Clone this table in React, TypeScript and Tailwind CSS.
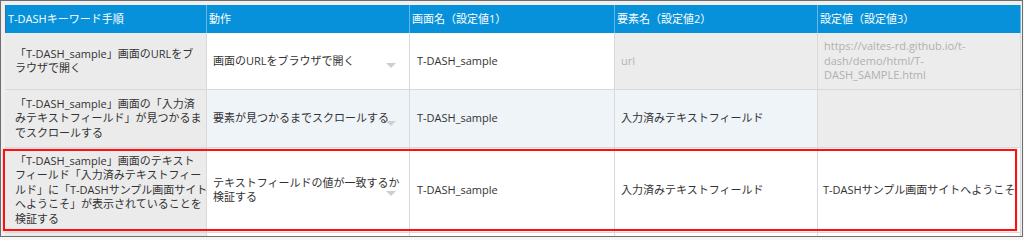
import React from "react";

const F = "font-['Open_Sans','Noto_Sans_CJK_JP',sans-serif]";

function Caret() {
  return (
    <span className="absolute right-[13px] top-1/2 mt-[2px] w-0 h-0 border-l-[5px] border-r-[5px] border-t-[5px] border-l-transparent border-r-transparent border-t-[#cfcfcf]" />
  );
}

function Lines({ lines }: { lines: string[] }) {
  return (
    <div className="whitespace-nowrap">
      {lines.map((l, i) => (
        <div key={i}>{l}</div>
      ))}
    </div>
  );
}

const cellBase = "flex items-center border-r border-b border-[#d9d9d9] text-[11px] leading-[14.5px]";

export default function App() {
  const headers = [
    "T-DASHキーワード手順",
    "動作",
    "画面名（設定値1）",
    "要素名（設定値2）",
    "設定値（設定値3）",
  ];
  const cols = "grid grid-cols-[202px_203px_205px_203px_203px]";
  return (
    <div className={`w-[1024px] h-[240px] bg-[#f6f6f6] ${F}`}>
      <div className="w-[1023px] h-[237px] border border-[#6e6e6e] bg-[#efefef] pt-[4px] pl-[4px] overflow-hidden">
        <div className="w-[1016px]">
          {/* header */}
          <div className={`${cols} h-[28px]`}>
            {headers.map((h, i) => (
              <div
                key={i}
                className={`flex items-center px-[2px] bg-[#0791da] text-white text-[11px] border-r border-[#66b7e6] ${i === 0 ? "border-l border-l-[#3a6f9a]" : ""}`}
              >
                {h}
              </div>
            ))}
          </div>
          {/* row 1 */}
          <div className={`${cols} h-[57px] text-[#333333]`}>
            <div className={`${cellBase} bg-[#ebebeb] pl-[10px]`}>
              <Lines lines={["「T-DASH_sample」画面のURLをブ", "ラウザで開く"]} />
            </div>
            <div className={`${cellBase} relative bg-white pl-[6px]`}>
              <span className="whitespace-nowrap">画面のURLをブラウザで開く</span>
              <Caret />
            </div>
            <div className={`${cellBase} bg-white pl-[7px]`}>T-DASH_sample</div>
            <div className={`${cellBase} bg-[#ececec] pl-[6px] text-[#b5b5b5]`}>url</div>
            <div className={`${cellBase} bg-[#ececec] pl-[6px] text-[#b0b0b0]`}>
              <Lines lines={["https://valtes-rd.github.io/t-", "dash/demo/html/T-", "DASH_SAMPLE.html"]} />
            </div>
          </div>
          {/* row 2 */}
          <div className={`${cols} h-[58px] text-[#333333]`}>
            <div className={`${cellBase} bg-[#ebebeb] pl-[10px]`}>
              <Lines
                lines={[
                  "「T-DASH_sample」画面の「入力済",
                  "みテキストフィールド」が見つかるま",
                  "でスクロールする",
                ]}
              />
            </div>
            <div className={`${cellBase} relative bg-[#eff4f9] pl-[6px]`}>
              <span className="whitespace-nowrap">要素が見つかるまでスクロールする</span>
              <Caret />
            </div>
            <div className={`${cellBase} bg-[#eff4f9] pl-[7px]`}>T-DASH_sample</div>
            <div className={`${cellBase} bg-[#eff4f9] pl-[6px]`}>入力済みテキストフィールド</div>
            <div className={`${cellBase} bg-[#ececec]`} />
          </div>
          {/* row 3 */}
          <div className={`${cols} relative h-[85px] text-[#333333]`}>
            <div className={`${cellBase} bg-[#ebebeb] pl-[10px]`}>
              <Lines
                lines={[
                  "「T-DASH_sample」画面のテキスト",
                  "フィールド「入力済みテキストフィー",
                  "ルド」に「T-DASHサンプル画面サイト",
                  "へようこそ」が表示されていることを",
                  "検証する",
                ]}
              />
            </div>
            <div className={`${cellBase} relative bg-white pl-[6px]`}>
              <Lines lines={["テキストフィールドの値が一致するか", "検証する"]} />
              <span className="absolute right-[13px] top-[43px] w-0 h-0 border-l-[5px] border-r-[5px] border-t-[5px] border-l-transparent border-r-transparent border-t-[#cfcfcf]" />
            </div>
            <div className={`${cellBase} bg-white pl-[7px]`}>T-DASH_sample</div>
            <div className={`${cellBase} bg-white pl-[6px]`}>入力済みテキストフィールド</div>
            <div className={`${cellBase} bg-white pl-[5px] whitespace-nowrap`}>T-DASHサンプル画面サイトへようこそ</div>
            <div className="absolute left-[-2px] right-[4px] top-[1px] bottom-[2px] border-2 border-[#ff1010] shadow-[0_0_1px_#ff9090]" />
          </div>
          {/* partial row 4 */}
          <div className={`${cols} h-[20px]`}>
            <div className="bg-[#ebebeb] border-r border-[#d9d9d9]" />
            <div className="bg-white border-r border-[#d9d9d9]" />
            <div className="bg-white border-r border-[#d9d9d9]" />
            <div className="bg-white border-r border-[#d9d9d9]" />
            <div className="bg-white border-r border-[#d9d9d9]" />
          </div>
        </div>
      </div>
    </div>
  );
}
